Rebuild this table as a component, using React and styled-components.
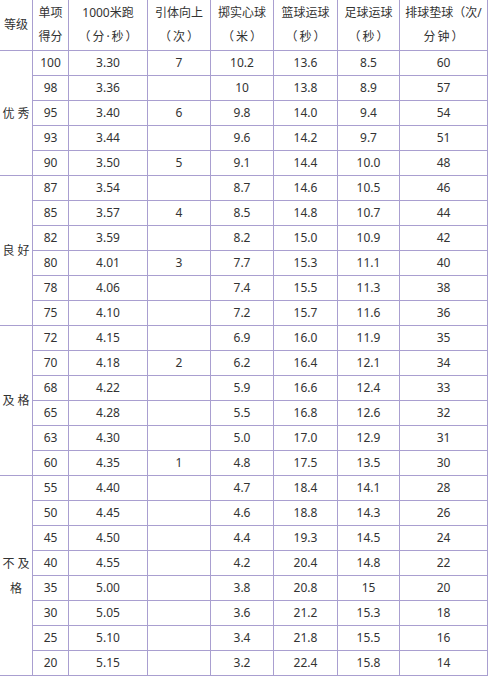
import styled, { createGlobalStyle } from "styled-components";

const GlobalStyle = createGlobalStyle`
  html, body {
    margin: 0;
    padding: 0;
    background: #ffffff;
  }
`;

const Table = styled.table`
  border-collapse: collapse;
  table-layout: fixed;
  width: 488px;
  font-family: "Noto Sans", "Noto Sans CJK SC", sans-serif;
  font-size: 12px;
  color: #333333;
  margin-top: -1px;
  margin-left: -1px;
`;

const HeadRow = styled.tr`
  height: 51px;
`;

const Row = styled.tr`
  height: 25px;
`;

const Cell = styled.td`
  border: 1px solid #a99fd0;
  padding: 0;
  text-align: center;
  vertical-align: middle;
  line-height: 24px;
  white-space: ${(p) => (p.$wrap ? "normal" : "nowrap")};
`;

const GroupCell = styled(Cell)`
  padding: 0 1px;
  word-break: break-all;
  line-height: 25px;
`;

const Unit = styled.span`
  letter-spacing: ${(p) => (p.$spaced ? "2px" : "0")};
  margin-right: ${(p) => (p.$spaced ? "-2px" : "0")};
`;

const widths = [33, 36, 79, 63, 63, 64, 62, 88];

const groups = [
  {
    label: "优 秀",
    rows: [
      ["100", "3.30", "7", "10.2", "13.6", "8.5", "60"],
      ["98", "3.36", "", "10", "13.8", "8.9", "57"],
      ["95", "3.40", "6", "9.8", "14.0", "9.4", "54"],
      ["93", "3.44", "", "9.6", "14.2", "9.7", "51"],
      ["90", "3.50", "5", "9.1", "14.4", "10.0", "48"],
    ],
  },
  {
    label: "良 好",
    rows: [
      ["87", "3.54", "", "8.7", "14.6", "10.5", "46"],
      ["85", "3.57", "4", "8.5", "14.8", "10.7", "44"],
      ["82", "3.59", "", "8.2", "15.0", "10.9", "42"],
      ["80", "4.01", "3", "7.7", "15.3", "11.1", "40"],
      ["78", "4.06", "", "7.4", "15.5", "11.3", "38"],
      ["75", "4.10", "", "7.2", "15.7", "11.6", "36"],
    ],
  },
  {
    label: "及 格",
    rows: [
      ["72", "4.15", "", "6.9", "16.0", "11.9", "35"],
      ["70", "4.18", "2", "6.2", "16.4", "12.1", "34"],
      ["68", "4.22", "", "5.9", "16.6", "12.4", "33"],
      ["65", "4.28", "", "5.5", "16.8", "12.6", "32"],
      ["63", "4.30", "", "5.0", "17.0", "12.9", "31"],
      ["60", "4.35", "1", "4.8", "17.5", "13.5", "30"],
    ],
  },
  {
    label: "不 及 格",
    rows: [
      ["55", "4.40", "", "4.7", "18.4", "14.1", "28"],
      ["50", "4.45", "", "4.6", "18.8", "14.3", "26"],
      ["45", "4.50", "", "4.4", "19.3", "14.5", "24"],
      ["40", "4.55", "", "4.2", "20.4", "14.8", "22"],
      ["35", "5.00", "", "3.8", "20.8", "15", "20"],
      ["30", "5.05", "", "3.6", "21.2", "15.3", "18"],
      ["25", "5.10", "", "3.4", "21.8", "15.5", "16"],
      ["20", "5.15", "", "3.2", "22.4", "15.8", "14"],
    ],
  },
];

const headers = [
  ["单项", "得分", false],
  ["1000米跑", "（分·秒）", true],
  ["引体向上", "（次）", true],
  ["掷实心球", "（米）", true],
  ["篮球运球", "（秒）", true],
  ["足球运球", "（秒）", true],
  ["排球垫球（次/", "分钟）", true],
];

const App = () => {
  return (
    <>
      <GlobalStyle />
      <Table>
        <colgroup>
          {widths.map((w, i) => (
            <col key={i} style={{ width: w }} />
          ))}
        </colgroup>
        <tbody>
          <HeadRow>
            <Cell>等级</Cell>
            {headers.map(([a, b, spaced]) => (
              <Cell key={a}>
                {a}
                <br />
                <Unit $spaced={spaced}>{b}</Unit>
              </Cell>
            ))}
          </HeadRow>
          {groups.map((g) =>
            g.rows.map((r, i) => (
              <Row key={g.label + i}>
                {i === 0 && (
                  <GroupCell rowSpan={g.rows.length} $wrap>
                    {g.label}
                  </GroupCell>
                )}
                {r.map((v, j) => (
                  <Cell key={j}>{v}</Cell>
                ))}
              </Row>
            ))
          )}
        </tbody>
      </Table>
    </>
  );
};

export default App;
